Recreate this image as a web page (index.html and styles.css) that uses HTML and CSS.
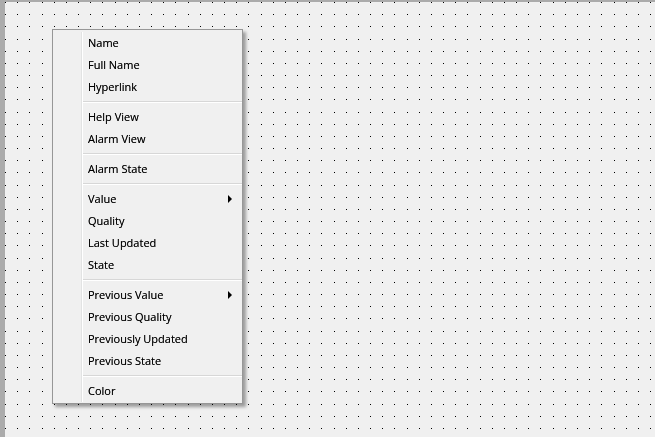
FILE: index.html
```html
<!DOCTYPE html>
<html>
<head>
<meta charset="utf-8">
<link rel="stylesheet" href="styles.css">
</head>
<body>
<div class="app">
  <div class="topbar"></div>
  <div class="main">
    <div class="leftbar"></div>
    <div class="surface">
      <canvas class="grid" id="grid"></canvas>
      <div class="menu">
        <div class="gutter"></div>
        <div class="list">
          <div class="item">Name</div>
          <div class="item">Full Name</div>
          <div class="item">Hyperlink</div>
          <div class="sep"></div>
          <div class="item">Help View</div>
          <div class="item">Alarm View</div>
          <div class="sep"></div>
          <div class="item">Alarm State</div>
          <div class="sep"></div>
          <div class="item">Value<span class="arrow"></span></div>
          <div class="item">Quality</div>
          <div class="item">Last Updated</div>
          <div class="item">State</div>
          <div class="sep"></div>
          <div class="item">Previous Value<span class="arrow"></span></div>
          <div class="item">Previous Quality</div>
          <div class="item">Previously Updated</div>
          <div class="item">Previous State</div>
          <div class="sep"></div>
          <div class="item">Color</div>
        </div>
      </div>
    </div>
  </div>
</div>
<script src="grid.js"></script>
</body>
</html>
```

FILE: styles.css
```css
html, body {
  margin: 0;
  padding: 0;
  width: 100%;
  height: 100%;
  overflow: hidden;
}
body {
  background: #f0f0f0;
  font-family: "Segoe UI", "Open Sans", "Liberation Sans", sans-serif;
  font-size: 11px;
  color: #000;
}
.app {
  display: flex;
  flex-direction: column;
  width: 655px;
  height: 437px;
}
.topbar {
  height: 2px;
  background: #ababab;
  flex: none;
}
.main {
  flex: 1;
  display: flex;
}
.leftbar {
  width: 5px;
  background: #ababab;
  flex: none;
}
.surface {
  flex: 1;
  position: relative;
  background: #f0f0f0;
}
.grid {
  position: absolute;
  left: 0;
  top: 0;
  display: block;
}
.menu {
  position: absolute;
  left: 47px;
  top: 27px;
  width: 189px;
  display: flex;
  background: #f0f0f0;
  border: 1px solid #979797;
  box-shadow: 3px 3px 3px rgba(0, 0, 0, 0.35);
  padding: 2px 0 1px 0;
}
.gutter {
  width: 28px;
  border-right: 1px solid #e2e3e3;
  flex: none;
}
.list {
  flex: 1;
  border-left: 1px solid #ffffff;
  display: flex;
  flex-direction: column;
}
.item {
  height: 22px;
  line-height: 22px;
  padding-left: 5px;
  padding-right: 10px;
  display: flex;
  align-items: center;
  justify-content: space-between;
  white-space: nowrap;
  text-shadow: 0 0 0.3px rgba(0, 0, 0, 0.6);
}
.arrow {
  width: 0;
  height: 0;
  border-top: 4px solid transparent;
  border-bottom: 4px solid transparent;
  border-left: 4px solid #000;
}
.sep {
  height: 1px;
  margin: 3px 0 3px 0;
  background: #d7d7d7;
  border-bottom: 1px solid #ffffff;
}
```

FILE: grid.js
```js
(function () {
  var c = document.getElementById('grid');
  var p = c.parentElement;
  var w = p.clientWidth, h = p.clientHeight;
  c.width = w;
  c.height = h;
  var ctx = c.getContext('2d');
  ctx.fillStyle = '#000';
  var s = 12.17;
  for (var j = 0; j * s < h; j++) {
    for (var i = 0; i * s < w; i++) {
      ctx.fillRect(Math.round(i * s), Math.round(j * s), 1, 1);
    }
  }
})();
```
